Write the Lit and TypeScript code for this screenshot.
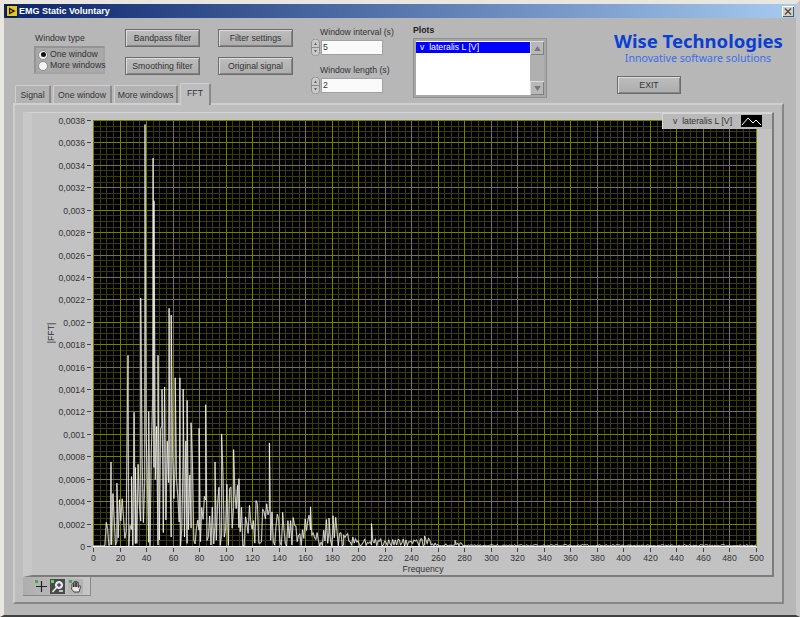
import { LitElement, html, css, svg } from 'lit';
import { customElement } from 'lit/decorators.js';

const PLOT_LEFT = 70;
const PLOT_TOP = 8;
const PLOT_W = 663;
const PLOT_H = 426;
const Y_MAX = 0.0038;
const X_MAX = 500;

const px = (hz: number) => PLOT_LEFT + (hz / X_MAX) * PLOT_W;
const py = (v: number) => PLOT_TOP + PLOT_H - (v / Y_MAX) * PLOT_H;

// hand read peaks of the spectrum: [Hz, value]
const PEAKS: [number, number][] = [
  [13.6, 0.00075], [18, 0.00056], [26.4, 0.0017], [29, 0.00062], [32, 0.0007],
  [36, 0.00221], [39.2, 0.00376], [42, 0.0012], [45.3, 0.00346], [46, 0.00308],
  [49, 0.0017], [52, 0.0014], [57.4, 0.00212], [59, 0.00206], [62, 0.0015],
  [65.5, 0.0015], [68, 0.0014], [71, 0.0013], [74, 0.0011], [80, 0.00105],
  [85, 0.00126], [92, 0.00075], [97, 0.001], [106, 0.00086], [110, 0.0006],
  [133, 0.00092], [143, 0.0003], [164, 0.00035], [178, 0.00025], [181, 0.00027],
  [189, 0.0001], [210, 0.0002], [250, 0.00009], [273, 0.00005],
];

function envelope(hz: number) {
  if (hz < 25) return 0.0005;
  if (hz < 60) return 0.0015;
  if (hz < 80) return 0.0012;
  if (hz < 110) return 0.0007;
  if (hz < 140) return 0.00042;
  if (hz < 185) return 0.00028;
  if (hz < 210) return 0.00012;
  if (hz < 255) return 0.00007;
  if (hz < 280) return 0.00003;
  return 0.000012;
}

function buildTrace() {
  let seed = 4711;
  const rand = () => {
    seed = (seed * 1664525 + 1013904223) % 4294967296;
    return seed / 4294967296;
  };
  const pts: [number, number][] = [[0, 0], [8, 0]];
  for (let hz = 9; hz <= X_MAX; hz += 1) {
    const r = rand();
    pts.push([hz, envelope(hz) * Math.pow(r, 1.6)]);
  }
  pts.push(...PEAKS);
  pts.sort((a, b) => a[0] - b[0]);
  return pts.map(([h, v]) => `${px(h).toFixed(1)},${py(v).toFixed(1)}`).join(' ');
}

function gridPath(step: number, skip: number) {
  let d = '';
  for (let hz = 0; hz <= X_MAX; hz += step) {
    if (skip && hz % skip === 0) continue;
    const x = Math.round(px(hz)) + 0.5;
    d += `M${x} ${PLOT_TOP}V${PLOT_TOP + PLOT_H}`;
  }
  return d;
}

function gridPathY(minor: boolean) {
  let d = '';
  for (let i = 0; i <= 76; i++) {
    const isMajor = i % 4 === 0;
    if (isMajor === minor) continue;
    const y = Math.round(py((i / 76) * Y_MAX)) + 0.5;
    d += `M${PLOT_LEFT} ${y}H${PLOT_LEFT + PLOT_W}`;
  }
  return d;
}

const yLabel = (i: number) =>
  i === 0 ? '0' : (i * 0.0002).toFixed(4).replace(/0+$/, '').replace('.', ',');

@customElement('app-root')
export class AppRoot extends LitElement {
  static styles = css`
    :host {
      display: block;
      width: 800px;
      height: 617px;
      overflow: hidden;
      font-family: "Liberation Sans", sans-serif;
      font-size: 8.7px;
      color: #333;
    }
    .window {
      box-sizing: border-box;
      width: 800px;
      height: 617px;
      background: #b7b7b7;
      border-top: 4px solid #e8e6de;
      border-left: 4px solid #e8e6de;
      border-right: 4px solid #c8c8c8;
      border-bottom: 2px solid #404040;
      display: flex;
      flex-direction: column;
    }
    .titlebar {
      height: 14px;
      flex: none;
      display: flex;
      align-items: center;
      padding: 0 2px;
      gap: 1px;
      background: linear-gradient(90deg, #0a246a, #a6caf0);
      color: #fff;
      font: bold 9px "Liberation Sans", sans-serif;
    }
    .titlebar span { flex: 1; }
    .close {
      width: 12px;
      height: 11px;
      background: #d4d0c8;
      box-shadow: inset 1px 1px #fff, inset -1px -1px #555;
    }
    .close svg { display: block; }
    .head {
      height: 85px;
      flex: none;
      display: flex;
      padding-left: 11px;
    }
    .left {
      width: 296px;
      flex: none;
      display: flex;
      flex-direction: column;
    }
    .left-top {
      height: 65px;
      flex: none;
      display: flex;
      padding-left: 19px;
    }
    .group-col { width: 71px; padding-top: 14px; margin-right: 20px; }
    .group-col label, .num label { display: block; height: 12px; line-height: 12px; white-space: nowrap; }
    .group-col label { margin-left: 1px; }
    .group {
      box-sizing: border-box;
      height: 28px;
      margin-top: 2px;
      padding: 1px 0 0 2px;
      background: #a9a9a9;
      border: 2px solid #949494;
      border-right-color: #a4a4a4;
      border-bottom-color: #a4a4a4;
    }
    .radio { display: flex; align-items: center; gap: 2px; height: 11px; line-height: 11px; white-space: nowrap; }
    .dot {
      box-sizing: border-box;
      width: 10px;
      height: 10px;
      flex: none;
      border-radius: 50%;
      background: #f4f4f4;
      border: 1px solid #8a8a8a;
      display: grid;
      place-items: center;
    }
    .dot.on::after {
      content: "";
      width: 5px;
      height: 5px;
      border-radius: 50%;
      background: #111;
    }
    .btn-col {
      width: 75px;
      padding-top: 11px;
      margin-right: 18px;
      display: flex;
      flex-direction: column;
      gap: 10px;
    }
    .btn {
      box-sizing: border-box;
      height: 18px;
      display: grid;
      place-items: center;
      white-space: nowrap;
      background: linear-gradient(#bdbdbd, #adadad);
      border: 1px solid #6c6c6c;
      box-shadow: inset 1px 1px #dcdcdc, inset -1px -1px #858585;
    }
    .tabs {
      display: flex;
      align-items: flex-end;
      gap: 2px;
      height: 20px;
      position: relative;
      z-index: 1;
    }
    .tab {
      box-sizing: border-box;
      height: 18px;
      display: grid;
      place-items: center;
      white-space: nowrap;
      background: #b3b3b3;
      border: 1px solid #d0d0d0;
      border-right: 2px solid #8a8a8a;
      border-bottom: none;
      border-radius: 2px 2px 0 0;
    }
    .tab.active {
      height: 22px;
      margin-bottom: -2px;
      background: #bdbdbd;
      padding-bottom: 4px;
    }
    .num { width: 102px; flex: none; padding-top: 8px; }
    .num label { margin-left: 9px; }
    .num-row { display: flex; align-items: center; gap: 2px; height: 13px; margin: 3px 0 10px; }
    .spin { width: 9px; height: 17px; flex: none; display: block; }
    .input {
      box-sizing: border-box;
      width: 60px;
      height: 13px;
      background: #fafafa;
      padding-left: 1px;
      line-height: 13px;
      box-shadow: 0 0 0 1px #a2a2a2;
    }
    .plots { width: 134px; flex: none; padding-top: 6px; }
    .plots b { display: block; height: 12px; line-height: 12px; color: #222; }
    .listbox {
      box-sizing: border-box;
      height: 60px;
      margin-top: 2px;
      display: flex;
      padding: 2px;
      background: #a8a8a8;
      border: 1px solid #8f8f8f;
    }
    .list { flex: 1; background: #fff; }
    .sel {
      height: 11px;
      line-height: 11px;
      margin-top: 1px;
      background: #0000ff;
      color: #fff;
      padding-left: 4px;
      white-space: pre;
    }
    .scroll {
      width: 14px;
      flex: none;
      background: #b0b0b0;
      display: flex;
      flex-direction: column;
      justify-content: space-between;
    }
    .arrow {
      height: 14px;
      background: #b8b8b8;
      box-shadow: inset 1px 1px #dcdcdc, inset -1px -1px #808080;
      display: grid;
      place-items: center;
    }
    .brand {
      width: 168px;
      flex: none;
      margin-left: 67px;
      padding-top: 13px;
      text-align: center;
    }
    .brand h1 {
      margin: 0;
      font: bold 18.5px/20px "Noto Sans", sans-serif;
      color: #0a3fd6;
      white-space: nowrap;
    }
    .brand p {
      margin: 0;
      font: 10.6px/15px "Noto Sans", sans-serif;
      color: #3a6ee6;
      white-space: nowrap;
    }
    .exit {
      width: 64px;
      margin: 10px 0 0 3px;
      height: 18px;
    }
    .panel {
      box-sizing: border-box;
      width: 771px;
      height: 501px;
      margin-left: 9px;
      flex: none;
      background: #bdbdbd;
      border: 2px solid #cfcfcf;
      border-right-color: #868686;
      border-bottom-color: #868686;
      padding: 7px 0 0 8px;
    }
    .graph {
      box-sizing: border-box;
      position: relative;
      width: 751px;
      height: 465px;
      background: #c2c2c2;
      border-bottom: 2px solid #7c7c7c;
      border-top: 1px solid #d4d4d4;
      border-right: 2px solid #7c7c7c;
      border-left: 9px solid #c8c8c8;
    }
    .plot {
      position: absolute;
      left: -9px;
      top: -1px;
      font-family: "Liberation Sans", sans-serif;
      font-size: 8.7px;
    }
    .legend {
      position: absolute;
      right: 0;
      top: 0;
      box-sizing: border-box;
      width: 110px;
      height: 16px;
      display: flex;
      align-items: center;
      justify-content: space-between;
      padding: 0 10px 0 11px;
      background: #b9b9b9;
      box-shadow: inset 1px 1px #d8d8d8;
      white-space: pre;
    }
    .swatch { width: 21px; height: 12px; background: #000; display: block; }
    .toolbar {
      width: 68px;
      height: 19px;
      display: flex;
      align-items: center;
      gap: 1px;
      padding-left: 11px;
      box-sizing: border-box;
      background: linear-gradient(90deg, #aeaeae, #c6c6c6);
      border-bottom: 1px solid #888;
      border-right: 1px solid #888;
    }
    .tool { width: 15px; height: 15px; background: #b4b4b4; display: block; }
    .tool.on { background: #4a4a4a; }
  `;

  private trace = buildTrace();

  private renderPlot() {
    const majorX = Array.from({ length: 26 }, (_, i) => i * 20);
    const majorY = Array.from({ length: 20 }, (_, i) => i);
    return html`<svg class="plot" width="751" height="465" viewBox="0 0 751 465">
      <rect x=${PLOT_LEFT} y=${PLOT_TOP} width=${PLOT_W} height=${PLOT_H} fill="#000"></rect>
      <path d=${gridPath(5, 20)} stroke="#3c3c00" fill="none"></path>
      <path d=${gridPathY(true)} stroke="#3c3c00" fill="none"></path>
      <path d=${gridPath(20, 0)} stroke="#7c7c00" fill="none"></path>
      <path d=${gridPathY(false)} stroke="#7c7c00" fill="none"></path>
      <polyline points=${this.trace} fill="none" stroke="#a8a8a8" stroke-opacity="0.35" stroke-width="1.6"></polyline>
      <polyline points=${this.trace} fill="none" stroke="#fff" stroke-width="0.7"></polyline>
      <path d="M${PLOT_LEFT} ${PLOT_TOP + PLOT_H + 0.5}H${PLOT_LEFT + PLOT_W}" stroke="#f4f4f4"></path>
      ${majorY.map((i) => {
        const y = Math.round(py(i * 0.0002)) + 0.5;
        return svg`
          <path d="M${PLOT_LEFT - 6} ${y}h4" stroke="#444"></path>
          <text x=${PLOT_LEFT - 8} y=${y + 3} text-anchor="end" fill="#333">${yLabel(i)}</text>`;
      })}
      ${majorX.map((hz) => {
        const x = Math.round(px(hz)) + 0.5;
        return svg`
          <path d="M${x} ${PLOT_TOP + PLOT_H + 2}v4" stroke="#444"></path>
          <text x=${x} y=${PLOT_TOP + PLOT_H + 15} text-anchor="middle" fill="#333">${hz}</text>`;
      })}
      <text x="400" y="460" text-anchor="middle" fill="#333">Frequency</text>
      <text transform="translate(31 221) rotate(-90)" text-anchor="middle" fill="#333">|FFT|</text>
    </svg>`;
  }

  private renderSpin() {
    return html`<svg class="spin" viewBox="0 0 9 17">
      <path d="M4.5 0C2 0 .5 2 .5 4.5v8C.5 15 2 17 4.5 17S8.5 15 8.5 12.5v-8C8.5 2 7 0 4.5 0Z" fill="#c9c9c9" stroke="#8f8f8f"></path>
      <path d="M1 8.5H8" stroke="#8a8a8a"></path>
      <path d="M4.5 3.5 6 6H3ZM4.5 13.5 6 11H3Z" fill="#666"></path>
    </svg>`;
  }

  private renderTools() {
    return html`
      <svg class="tool" viewBox="0 0 15 15">
        <rect x="1" y="1" width="3" height="3" fill="#3fae3f"></rect>
        <path d="M7.5 2v11M2 7.5h11" stroke="#222" stroke-width="1.2" fill="none"></path>
      </svg>
      <svg class="tool on" viewBox="0 0 15 15">
        <rect x="1" y="1" width="3" height="3" fill="#4fe04f"></rect>
        <circle cx="9" cy="6" r="3.5" fill="#d8d8e8" stroke="#fff"></circle>
        <path d="M7 6h4M9 4v4" stroke="#223" fill="none"></path>
        <path d="M6.5 8.5 2.5 13M9 12h4" stroke="#eee" stroke-width="1.5" fill="none"></path>
      </svg>
      <svg class="tool" viewBox="0 0 15 15" style="margin-left:2px">
        <rect x="1" y="1" width="3" height="3" fill="#3fae3f"></rect>
        <path d="M4 8V5.5a.8.8 0 0 1 1.6 0V8V3.5a.8.8 0 0 1 1.6 0V8V3a.8.8 0 0 1 1.6 0V8V4a.8.8 0 0 1 1.6 0V8.5l.8-1.5a.8.8 0 0 1 1.4.8L11 13H6L3.5 10Z" fill="#e8e8e8" stroke="#222" stroke-width=".8"></path>
      </svg>`;
  }

  render() {
    return html`
      <div class="window">
        <div class="titlebar">
          <svg width="12" height="12" viewBox="0 0 12 12">
            <rect width="12" height="12" fill="#1a1a1a"></rect>
            <rect x="1" y="1" width="10" height="10" fill="#e8c820"></rect>
            <path d="M3 2.5 9.5 6 3 9.5Z" fill="#111"></path>
            <path d="M4.2 4.5 7 6 4.2 7.5Z" fill="#f0a020"></path>
          </svg>
          <span>EMG Static Voluntary</span>
          <div class="close">
            <svg width="12" height="11" viewBox="0 0 12 11">
              <path d="M3 2.5 9 8.5M9 2.5 3 8.5" stroke="#444" stroke-width="1.2"></path>
            </svg>
          </div>
        </div>
        <div class="head">
          <div class="left">
            <div class="left-top">
              <div class="group-col">
                <label>Window type</label>
                <div class="group">
                  <div class="radio"><i class="dot on"></i>One window</div>
                  <div class="radio"><i class="dot"></i>More windows</div>
                </div>
              </div>
              <div class="btn-col">
                <div class="btn">Bandpass filter</div>
                <div class="btn">Smoothing filter</div>
              </div>
              <div class="btn-col">
                <div class="btn">Filter settings</div>
                <div class="btn">Original signal</div>
              </div>
            </div>
            <div class="tabs">
              <div class="tab" style="width:36px">Signal</div>
              <div class="tab" style="width:59px">One window</div>
              <div class="tab" style="width:64px">More windows</div>
              <div class="tab active" style="width:31px">FFT</div>
            </div>
          </div>
          <div class="num">
            <label>Window interval (s)</label>
            <div class="num-row">${this.renderSpin()}<div class="input">5</div></div>
            <label>Window length (s)</label>
            <div class="num-row">${this.renderSpin()}<div class="input">2</div></div>
          </div>
          <div class="plots">
            <b>Plots</b>
            <div class="listbox">
              <div class="list"><div class="sel">v  lateralis L [V]</div></div>
              <div class="scroll">
                <div class="arrow"><svg width="7" height="5" viewBox="0 0 8 6"><path d="M4 0 8 6H0Z" fill="#777"></path></svg></div>
                <div class="arrow"><svg width="7" height="5" viewBox="0 0 8 6"><path d="M0 0H8L4 6Z" fill="#777"></path></svg></div>
              </div>
            </div>
          </div>
          <div class="brand">
            <h1>Wise Technologies</h1>
            <p>Innovative software solutions</p>
            <div class="btn exit">EXIT</div>
          </div>
        </div>
        <div class="panel">
          <div class="graph">
            ${this.renderPlot()}
            <div class="legend">
              <span>v  lateralis L [V]</span>
              <svg class="swatch" viewBox="0 0 21 12">
                <path d="M1 10 7 3 12 8 15 5 20 10" stroke="#fff" fill="none"></path>
              </svg>
            </div>
          </div>
          <div class="toolbar">${this.renderTools()}</div>
        </div>
      </div>
    `;
  }
}
